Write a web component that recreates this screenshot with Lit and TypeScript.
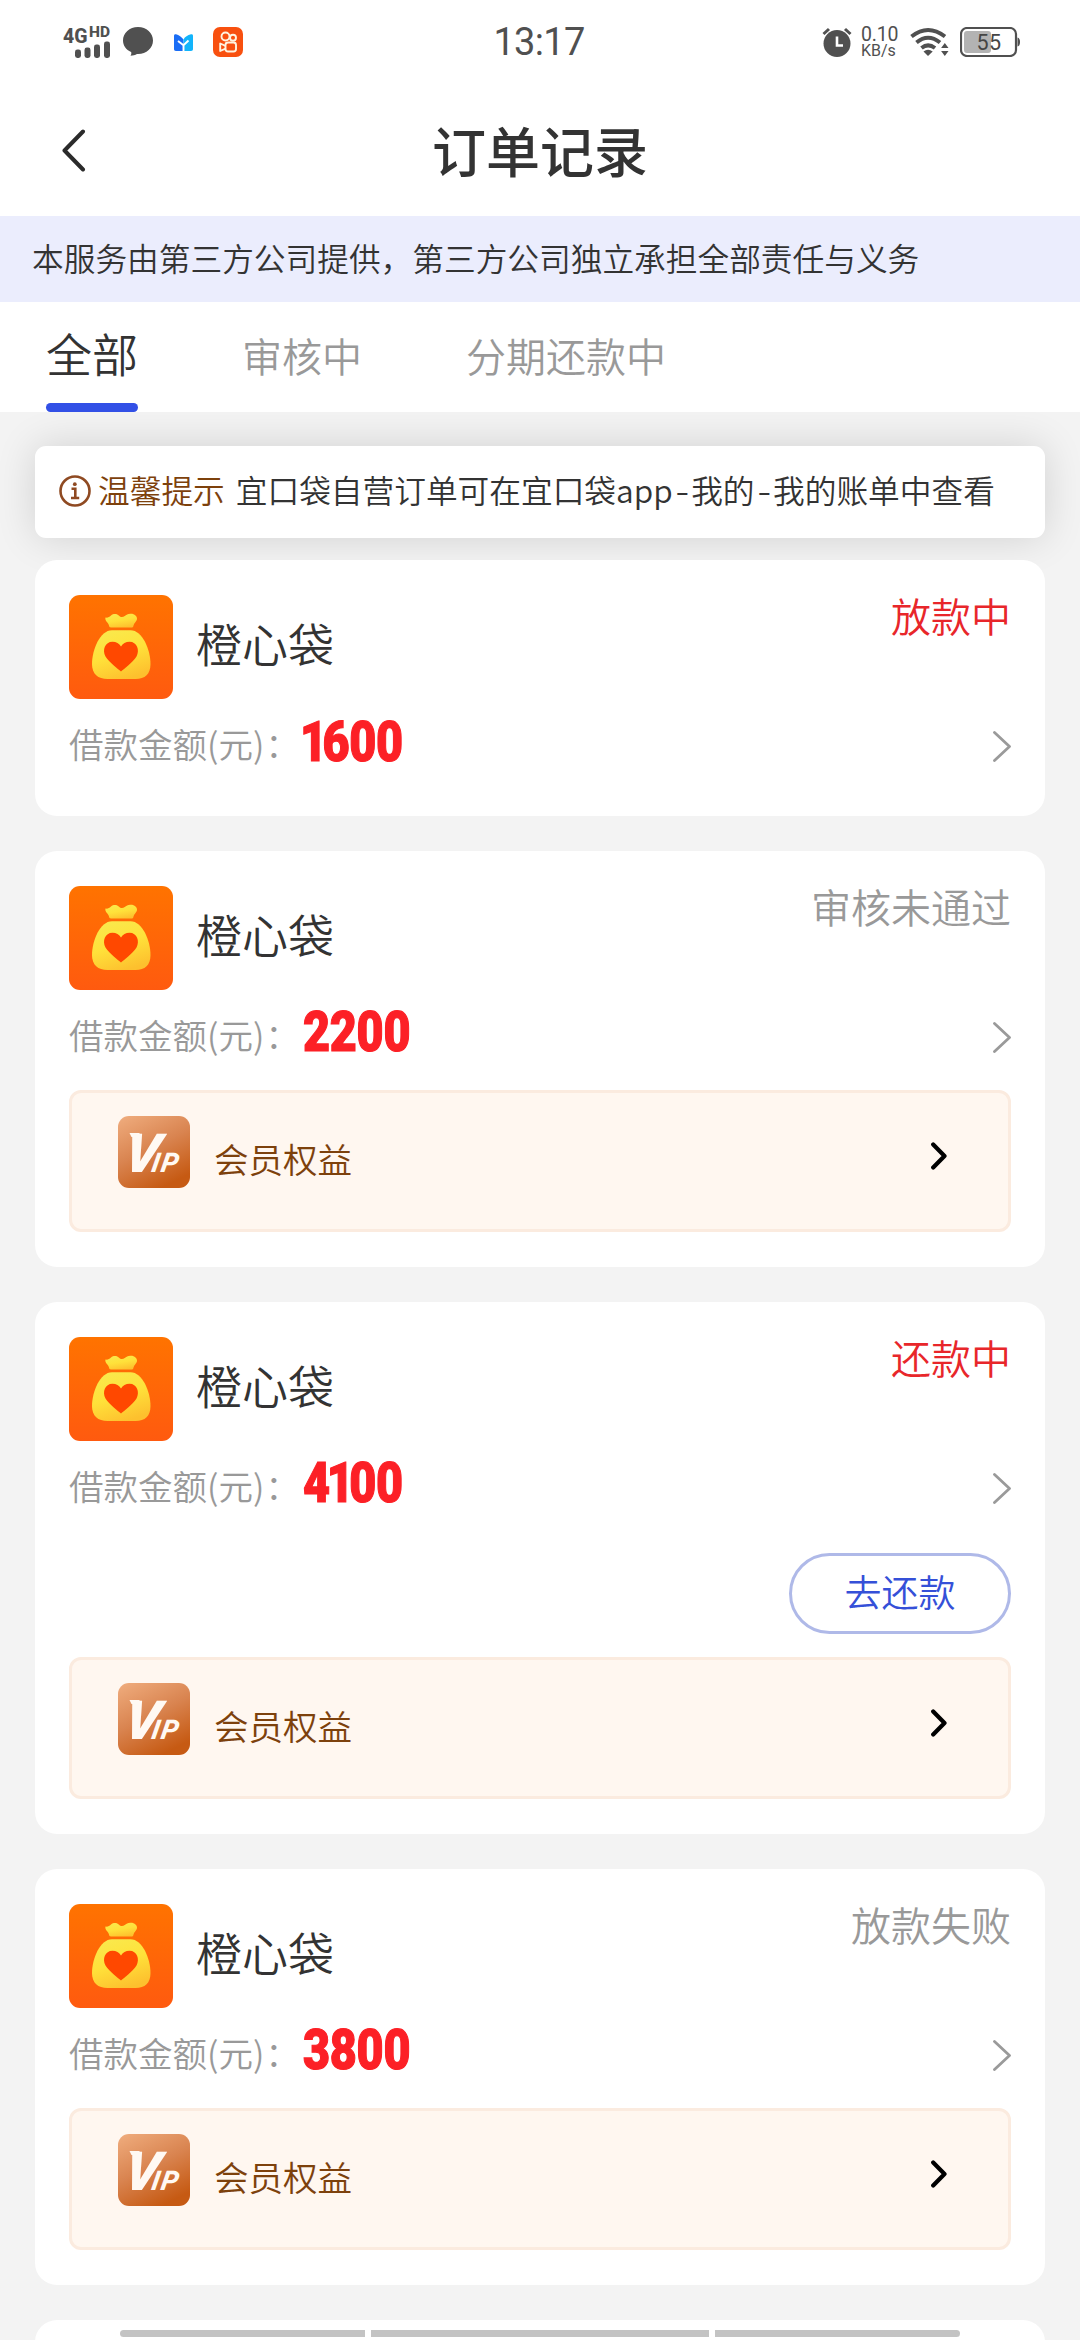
import { LitElement, html, css, svg, nothing } from "lit";
import { customElement, property } from "lit/decorators.js";
import { classMap } from "lit/directives/class-map.js";

type Tone = "active" | "muted";

interface Order {
  name: string;
  amount: string;
  status: string;
  tone: Tone;
  action?: string;
  vip: boolean;
}

const ORDERS: Order[] = [
  { name: "橙心袋", amount: "1600", status: "放款中", tone: "active", vip: false },
  { name: "橙心袋", amount: "2200", status: "审核未通过", tone: "muted", vip: true },
  { name: "橙心袋", amount: "4100", status: "还款中", tone: "active", action: "去还款", vip: true },
  { name: "橙心袋", amount: "3800", status: "放款失败", tone: "muted", vip: true },
];

@customElement("status-bar")
export class StatusBar extends LitElement {
  static styles = css`
    :host {
      display: grid;
      grid-template-columns: 1fr auto 1fr;
      align-items: center;
      height: 84px;
      padding: 0 60px 0 62px;
      box-sizing: border-box;
      font-family: Roboto, "Noto Sans", sans-serif;
      font-weight: 400;
      color: #505050;
    }
    svg { display: block; }
    .left, .right { display: flex; align-items: center; }
    .right { justify-content: flex-end; }
    .signal { overflow: visible; }
    .bubble { margin-left: 12px; }
    .mail { margin-left: 21px; }
    .video { margin-left: 20px; }
    .time { font-size: 38px; line-height: 44px; letter-spacing: -0.7px; margin-right: 4px; }
    .rate {
      display: flex;
      flex-direction: column;
      margin-left: 9px;
      width: 38px;
      white-space: nowrap;
    }
    .rate-value { font-size: 19.500px; line-height: 17px; letter-spacing: -0.2px; }
    .rate-unit { font-size: 16px; line-height: 16px; }
    .wifi { margin-left: 11px; }
    .battery { margin-left: 10px; }
  `;

  render() {
    return html`
      <div class="left">
        <svg class="signal" width="49" height="34" viewBox="0 0 49 34" fill="#505050">
          <text x="1" y="17.500" font-size="21" font-weight="800" textLength="24.500" lengthAdjust="spacingAndGlyphs">4G</text>
          <text x="27" y="12" font-size="14.5" font-weight="800" textLength="21" lengthAdjust="spacingAndGlyphs">HD</text>
          <rect x="13" y="24.5" width="6" height="8.5" rx="2.4" />
          <rect x="22.5" y="22.5" width="6" height="10.5" rx="2.4" />
          <rect x="32" y="19.5" width="6" height="13.5" rx="2.4" />
          <rect x="42" y="16.5" width="6" height="16.5" rx="2.4" />
        </svg>
        <svg class="bubble" width="30" height="30" viewBox="0 0 30 30" fill="#505050">
          <path d="M15 0C23.500 0 30 6 30 13.500S23.500 27 15 27h-1c-1.800 1-4 1.700-6.500 1.700 1-1.300 1-2.600.6-3.700C3 22.800 0 18.500 0 13.500 0 6 6.500 0 15 0z" />
        </svg>
        <svg class="mail" width="19" height="17" viewBox="0 0 19 17">
          <path d="M0 2C0 .6.800 0 2 .3 5 1 7.500 3 9.500 5.500V17H2c-1.400 0-2-.7-2-2z" fill="#1a6df5" />
          <path d="M19 1.800C19 .5 18.200 0 17 .3c-3.500.8-6 2.500-7.500 5.200V17H17c1.400 0 2-.7 2-2z" fill="#12b4fb" />
          <path d="M4 7 9.500 11.300 14.500 6.500M9.500 11V17" fill="none" stroke="#fff" stroke-width="1.900" />
        </svg>
        <svg class="video" width="30" height="30" viewBox="0 0 30 30">
          <rect width="30" height="30" rx="7" fill="#f8500f" />
          <g fill="none" stroke="#fff4e0" stroke-width="1.900">
            <circle cx="12.500" cy="9.500" r="4" />
            <circle cx="20" cy="10.700" r="3" />
            <rect x="12.500" y="15.500" width="10.500" height="9" rx="2.500" />
            <path d="M12.500 18.800 7.200 16.500v7.500l5.300-2.300" stroke-linejoin="round" />
          </g>
        </svg>
      </div>
      <div class="time">13:17</div>
      <div class="right">
        <svg width="30" height="30" viewBox="0 0 30 30">
          <circle cx="15" cy="16.500" r="13.500" fill="#505050" />
          <path d="M1.500 7 7 2M28.500 7 23 2" stroke="#505050" stroke-width="3" />
          <path d="M15 9.500v9h6" fill="none" stroke="#fff" stroke-width="2.600" />
        </svg>
        <div class="rate">
          <span class="rate-value">0.10</span>
          <span class="rate-unit">KB/s</span>
        </div>
        <svg class="wifi" width="40" height="30" viewBox="0 0 40 30">
          <g fill="none" stroke="#505050" stroke-width="4">
            <path d="M1.500 9.500Q18 -3.500 35 9.500" />
            <path d="M6.500 15.500Q18 6 30 15.500" />
            <path d="M11.500 21Q18 15.800 25 21" />
          </g>
          <path d="M13.500 24.500Q18 21 22.700 24.500L18 29z" fill="#505050" />
          <path d="M34.800 16l3.700 5h-7.400zM34.800 29l-3.700-5h7.400z" fill="#505050" />
        </svg>
        <svg class="battery" width="60" height="30" viewBox="0 0 60 30">
          <rect x="4" y="4" width="27" height="22" rx="3" fill="#b3b3b3" />
          <rect x="1" y="1" width="55" height="28" rx="6" fill="none" stroke="#505050" stroke-width="2.200" />
          <path d="M57.500 10.500q2.500.5 2.500 4.500t-2.500 4.500z" fill="#505050" />
          <text x="16.500" y="22.700" font-size="21.500" textLength="24.500" fill="#454545">55</text>
        </svg>
      </div>
    `;
  }
}

@customElement("order-card")
export class OrderCard extends LitElement {
  @property({ attribute: false }) order!: Order;

  static styles = css`
    :host {
      display: flex;
      flex-direction: column;
      padding: 35px 34px;
      border-radius: 22px;
      background: #fff;
      color: #333;
    }
    svg { display: block; flex: none; }
    .head { display: flex; height: 103px; }
    .name {
      margin-left: 23px;
      font-size: 46px;
      line-height: 94px;
    }
    .status {
      margin-left: auto;
      font-size: 40px;
      line-height: 41px;
    }
    .status.active { color: #e8262a; }
    .status.muted { color: #999; }
    .row {
      display: flex;
      align-items: center;
      height: 69px;
      margin-top: 14px;
    }
    .label {
      width: 234px;
      padding-bottom: 7px;
      font-size: 34.500px;
      line-height: 50px;
      color: #999;
      white-space: nowrap;
    }
    .colon { margin-left: 1px; }
    .amount {
      flex: 1;
      height: 60px;
      overflow: visible;
    }
    .digits {
      font-family: Roboto, "Noto Sans", sans-serif;
      font-size: 55px;
      font-weight: 900;
      fill: #fc2026;
      stroke: #fc2026;
      stroke-width: 1.200px;
    }
    .action {
      align-self: flex-end;
      width: 222px;
      height: 81px;
      margin: 30px 0 5px;
      padding: 0 0 5px;
      box-sizing: border-box;
      border: 3px solid #afb9e8;
      border-radius: 41px;
      background: #fff;
      color: #3550d8;
      font: inherit;
      font-size: 37px;
      line-height: 64px;
    }
    .vip {
      display: flex;
      box-sizing: border-box;
      height: 142.500px;
      margin-top: 18px;
      padding: 23px 61px 0 46px;
      border: 3px solid #fbebdf;
      border-radius: 12px;
      background: #fff7f0;
    }
    .vip-label {
      flex: 1;
      margin-left: 24px;
      font-size: 34.500px;
      line-height: 85px;
      color: #7d410c;
    }
    .vip-arrow { margin-top: 26px; }
    .vip-text {
      font-family: Roboto, "Open Sans", sans-serif;
      font-weight: 900;
      font-style: italic;
      font-size: 54px;
      fill: #fff9f3;
    }
    .vip-small { font-size: 27px; font-weight: 800; }
  `;

  private renderLogo() {
    return html`<svg width="104" height="104" viewBox="0 0 104 104">
      <defs>
        <linearGradient id="tile" x1="0" y1="0" x2="0" y2="1">
          <stop offset="0" stop-color="#ff7300" />
          <stop offset="1" stop-color="#ff5a0f" />
        </linearGradient>
        <linearGradient id="bag" x1="0.2" y1="0" x2="0.6" y2="1">
          <stop offset="0" stop-color="#f9e94d" />
          <stop offset="0.5" stop-color="#ffe13a" />
          <stop offset="1" stop-color="#fdc02e" />
        </linearGradient>
      </defs>
      <rect width="104" height="104" rx="11" fill="url(#tile)" />
      <path d="M36.500 22.500C38.500 23 40 22.300 42 20.500c2.500-2 6-2 8 .3 1.500 1.700 4 1.700 5.700.3C57.500 19.500 59 18.500 62 18.700c3.500 0 6.500 2.500 6 5.500-.3 2.200-3 3.600-3.500 6.300-.2 1.500-.8 2-2 2H42c-1.500 0-1.800-.8-2-2-.5-3-4.500-4.500-3.500-8z" fill="url(#bag)" />
      <path d="M43 35.300H61.500C73.500 35.300 81.500 55 81.500 69 81.500 79 76 84 66.500 84H38.500C29 84 23 79 23 69 23 55 31 35.300 43 35.300z" fill="url(#bag)" />
      <path d="M52 76.500C50 74.500 40 67.500 36.500 61.500 33 55 36 46.800 43.500 46.800c3.700 0 6.800 1.800 8.500 4.700 1.700-2.900 4.800-4.700 8.500-4.700C68 46.800 71 55 67.500 61.500 64 67.500 54 74.500 52 76.500z" fill="#ff4800" />
    </svg>`;
  }

  // Digits sit on a tight pitch, with a narrower step for "1".
  private renderDigits(amount: string) {
    let x = 0;
    const starts = [...amount].map((d) => {
      const narrow = d === "1";
      const left = narrow ? x - 3 : x;
      x += narrow ? 19.5 : 26.8;
      return (left / 0.85).toFixed(1);
    });
    return svg`<text class="digits" transform="translate(0 44) scale(0.85 1)" x=${starts.join(" ")}>${amount}</text>`;
  }

  private renderVip() {
    return html`<div class="vip">
      <svg width="72" height="72" viewBox="0 0 72 72">
        <defs>
          <linearGradient id="badge" x1="0.1" y1="0" x2="0.6" y2="1">
            <stop offset="0" stop-color="#eeaa7b" />
            <stop offset="0.5" stop-color="#d98450" />
            <stop offset="1" stop-color="#c65a13" />
          </linearGradient>
        </defs>
        <rect width="72" height="72" rx="11" fill="url(#badge)" />
        <text class="vip-text" transform="translate(0 55.500) skewX(-10)" x="4" y="0">V<tspan class="vip-small" x="32.500 42" textLength="28">IP</tspan></text>
        <path d="M11.500 17h10v4h-8z" fill="#fff9f3" />
      </svg>
      <span class="vip-label">会员权益</span>
      <svg class="vip-arrow" width="16" height="28" viewBox="0 0 16 28">
        <path d="M2.200 2.500 13.500 14 2.200 25.500" fill="none" stroke="#000" stroke-width="4.200" stroke-linecap="round" stroke-linejoin="round" />
      </svg>
    </div>`;
  }

  render() {
    const o = this.order;
    return html`
      <div class="head">
        ${this.renderLogo()}
        <span class="name">${o.name}</span>
        <span class=${classMap({ status: true, [o.tone]: true })}>${o.status}</span>
      </div>
      <div class="row">
        <span class="label">借款金额(元)<span class="colon">：</span></span>
        <svg class="amount">${this.renderDigits(o.amount)}</svg>
        <svg width="18" height="31" viewBox="0 0 18 31">
          <path d="M1.500 1.500 16.500 15.500 1.500 29.500" fill="none" stroke="#9a9a9a" stroke-width="2.800" stroke-linecap="round" stroke-linejoin="round" />
        </svg>
      </div>
      ${o.action ? html`<button class="action">${o.action}</button>` : nothing}
      ${o.vip ? this.renderVip() : nothing}
    `;
  }
}

@customElement("app-root")
export class AppRoot extends LitElement {
  static styles = css`
    :host {
      display: flex;
      flex-direction: column;
      position: relative;
      width: 1080px;
      height: 2340px;
      overflow: hidden;
      background: #f3f3f3;
      font-family: "Noto Sans CJK SC", sans-serif;
      font-weight: 350;
      color: #333;
    }
    svg { display: block; flex: none; }
    .top { background: #fff; }
    .title-bar {
      display: grid;
      grid-template-columns: 1fr auto 1fr;
      align-items: center;
      height: 132px;
      padding: 0 62px;
    }
    .title {
      margin: 0;
      font-size: 54px;
      line-height: 132px;
      font-weight: 500;
    }
    .notice {
      height: 86px;
      padding-left: 32px;
      background: #ebedfd;
      font-size: 31.700px;
      line-height: 83px;
      white-space: nowrap;
    }
    .tabs {
      display: flex;
      height: 110px;
      padding-left: 46px;
      background: #fff;
    }
    .tab {
      display: flex;
      flex-direction: column;
      justify-content: space-between;
      font-size: 40px;
      line-height: 106px;
      color: #999;
    }
    .tab + .tab { margin-left: 104px; }
    .tab.current {
      font-size: 46px;
      line-height: 100px;
      color: #333;
    }
    .indicator { height: 9px; border-radius: 5px; background: #3250e6; }
    .content {
      flex: 1;
      min-height: 0;
      padding: 34px 35px 0;
      overflow: hidden;
    }
    .tip {
      display: flex;
      align-items: center;
      box-sizing: border-box;
      height: 92px;
      padding: 0 24px;
      border-radius: 11px;
      background: #fff;
      box-shadow: 0 0 40px rgba(0, 0, 0, 0.14);
      font-size: 31.700px;
      line-height: 87px;
      white-space: nowrap;
    }
    .tip-icon { margin-bottom: 2px; }
    .tip-label { margin: 0 11px 0 7px; padding-bottom: 5px; color: #7d410c; }
    .tip-body { padding-bottom: 5px; }
    .dash { display: inline-block; width: 18.500px; text-align: center; transform: scaleX(1.25); }
    .list {
      display: flex;
      flex-direction: column;
      gap: 34.600px;
      margin-top: 22px;
      position: relative;
    }
    .peek { height: 60px; border-radius: 22px; background: #fff; }
    .nav-hint {
      position: absolute;
      left: 120px;
      bottom: 3px;
      display: flex;
      gap: 6px;
      width: 840px;
      height: 7px;
      border-radius: 4px;
      overflow: hidden;
    }
    .nav-part { flex: 245; background: #c3c3c3; }
    .nav-part.middle { flex: 338; }
  `;

  render() {
    return html`
      <div class="top">
        <status-bar></status-bar>
        <div class="title-bar">
          <svg width="24" height="43" viewBox="0 0 24 43">
            <path d="M21 2.500 2.500 21.500 21 40.500" fill="none" stroke="#2b2b2b" stroke-width="4" stroke-linecap="round" stroke-linejoin="round" />
          </svg>
          <h1 class="title">订单记录</h1>
        </div>
      </div>
      <div class="notice">本服务由第三方公司提供，第三方公司独立承担全部责任与义务</div>
      <div class="tabs">
        <div class="tab current">全部<span class="indicator"></span></div>
        <div class="tab">审核中</div>
        <div class="tab">分期还款中</div>
      </div>
      <div class="content">
        <div class="tip">
          <svg class="tip-icon" width="32" height="32" viewBox="0 0 32 32" fill="none" stroke="#8f4a22">
            <circle cx="16" cy="16" r="14.500" stroke-width="2.600" />
            <circle cx="15.800" cy="9.200" r="1.900" fill="#8f4a22" stroke="none" />
            <path d="M12.500 13.800h3.800v8.800M12 23h8.200" stroke-width="2.600" />
          </svg>
          <span class="tip-label">温馨提示</span>
          <span class="tip-body">宜口袋自营订单可在宜口袋app<span class="dash">-</span>我的<span class="dash">-</span>我的账单中查看</span>
        </div>
        <div class="list">
          ${ORDERS.map((o) => html`<order-card .order=${o}></order-card>`)}
          <div class="peek"></div>
        </div>
      </div>
      <div class="nav-hint">
        <span class="nav-part"></span>
        <span class="nav-part middle"></span>
        <span class="nav-part"></span>
      </div>
    `;
  }
}
